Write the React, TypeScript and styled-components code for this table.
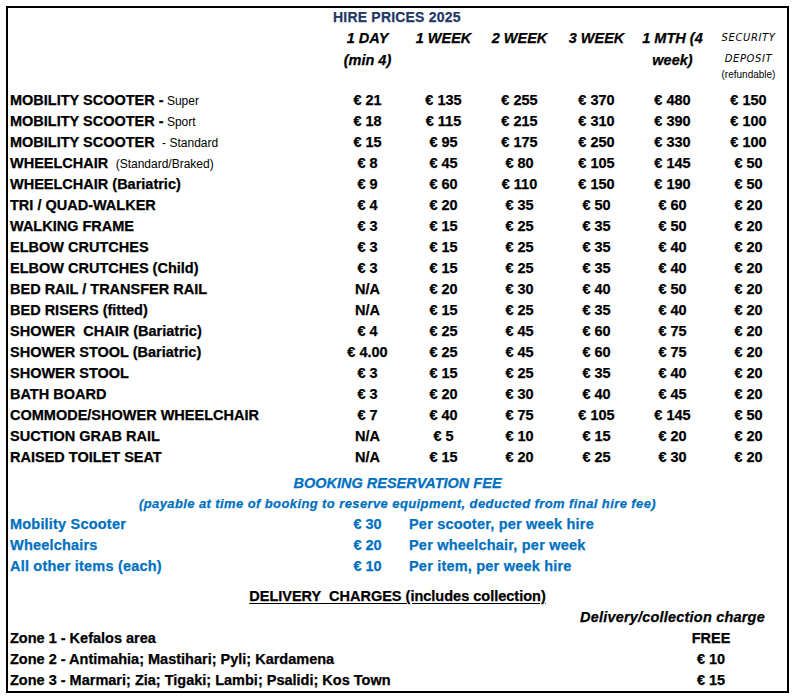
import React from 'react';
import styled, { createGlobalStyle } from 'styled-components';

const GlobalStyle = createGlobalStyle`
  html, body { margin: 0; padding: 0; background: #fff; }
  body { font-family: 'Liberation Sans', Arial, sans-serif; }
`;

const COLS = '321px 77px 75px 77px 77px 75px 77px';

const Sheet = styled.div`
  margin: 6px 0 0 6px;
  width: 779px;
  border: 2px solid #000;
  font-family: 'Liberation Sans', Arial, sans-serif;
  color: #000;
  font-size: 14.5px;
  font-weight: 700;
  -webkit-text-stroke: 0.25px currentColor;
`;

const Row = styled.div<{ $h?: number; $pt?: number }>`
  display: grid;
  grid-template-columns: ${COLS};
  height: ${(p) => p.$h ?? 21}px;
  padding-top: ${(p) => p.$pt ?? 0}px;
  box-sizing: border-box;
  line-height: ${(p) => (p.$h ?? 21) - (p.$pt ?? 0)}px;
  white-space: pre;
`;

const Title = styled.div`
  grid-column: 2 / span 3;
  padding-left: 4px;
  color: #1f3864;
  font-size: 14px;
  letter-spacing: 0.2px;
`;

const HeadCell = styled.div<{ $col: number }>`
  grid-column: ${(p) => p.$col};
  display: flex;
  flex-direction: column;
  align-items: center;
  font-style: italic;
  line-height: 22px;
`;

const Thin = styled.span`
  font-family: 'DejaVu Sans', sans-serif;
  font-size: 10px;
  font-weight: 200;
  font-style: italic;
  letter-spacing: 0.6px;
  -webkit-text-stroke: 0;
  line-height: 21px;
  height: 21px;
`;

const Small = styled.span`
  font-size: 10px;
  font-weight: 400;
  font-style: normal;
  line-height: 12px;
  -webkit-text-stroke: 0;
`;

const Name = styled.div`
  grid-column: 1;
  padding-left: 2px;
  overflow: hidden;
`;

const Sub = styled.span`
  font-size: 12px;
  font-weight: 400;
  -webkit-text-stroke: 0;
`;

const Price = styled.div`
  text-align: center;
`;

const Blue = styled.div<{ $size?: number; $ls?: number }>`
  grid-column: 1 / -1;
  text-align: center;
  color: #0070c0;
  font-style: italic;
  font-size: ${(p) => p.$size ?? 14.5}px;
  letter-spacing: ${(p) => p.$ls ?? 0}px;
`;

const FeeLabel = styled.div`
  grid-column: 1;
  padding-left: 2px;
  color: #0070c0;
  letter-spacing: 0.2px;
`;

const FeeAmount = styled.div`
  grid-column: 2;
  text-align: center;
  color: #0070c0;
`;

const FeeNote = styled.div`
  grid-column: 3 / -1;
  padding-left: 3px;
  color: #0070c0;
  letter-spacing: 0.2px;
`;

const DeliveryTitle = styled.div`
  grid-column: 1 / -1;
  text-align: center;
  text-decoration: underline;
  text-underline-offset: 2px;
`;

const ChargeHead = styled.div`
  grid-column: 5 / -1;
  text-align: center;
  font-style: italic;
  letter-spacing: 0.2px;
`;

const ZoneName = styled.div`
  grid-column: 1 / 5;
  padding-left: 2px;
`;

const ZoneCharge = styled.div`
  grid-column: 6 / -1;
  text-align: center;
`;

type Item = { name: string; sub?: string; prices: string[] };

const items: Item[] = [
  { name: 'MOBILITY SCOOTER -', sub: ' Super', prices: ['21', '135', '255', '370', '480', '150'] },
  { name: 'MOBILITY SCOOTER -', sub: ' Sport', prices: ['18', '115', '215', '310', '390', '100'] },
  { name: 'MOBILITY SCOOTER ', sub: ' - Standard', prices: ['15', '95', '175', '250', '330', '100'] },
  { name: 'WHEELCHAIR ', sub: ' (Standard/Braked)', prices: ['8', '45', '80', '105', '145', '50'] },
  { name: 'WHEELCHAIR (Bariatric)', prices: ['9', '60', '110', '150', '190', '50'] },
  { name: 'TRI / QUAD-WALKER', prices: ['4', '20', '35', '50', '60', '20'] },
  { name: 'WALKING FRAME', prices: ['3', '15', '25', '35', '50', '20'] },
  { name: 'ELBOW CRUTCHES', prices: ['3', '15', '25', '35', '40', '20'] },
  { name: 'ELBOW CRUTCHES (Child)', prices: ['3', '15', '25', '35', '40', '20'] },
  { name: 'BED RAIL / TRANSFER RAIL', prices: ['N/A', '20', '30', '40', '50', '20'] },
  { name: 'BED RISERS (fitted)', prices: ['N/A', '15', '25', '35', '40', '20'] },
  { name: 'SHOWER  CHAIR (Bariatric)', prices: ['4', '25', '45', '60', '75', '20'] },
  { name: 'SHOWER STOOL (Bariatric)', prices: ['4.00', '25', '45', '60', '75', '20'] },
  { name: 'SHOWER STOOL', prices: ['3', '15', '25', '35', '40', '20'] },
  { name: 'BATH BOARD', prices: ['3', '20', '30', '40', '45', '20'] },
  { name: 'COMMODE/SHOWER WHEELCHAIR', prices: ['7', '40', '75', '105', '145', '50'] },
  { name: 'SUCTION GRAB RAIL', prices: ['N/A', '5', '10', '15', '20', '20'] },
  { name: 'RAISED TOILET SEAT', prices: ['N/A', '15', '20', '25', '30', '20'] },
];

const fees = [
  { label: 'Mobility Scooter', amount: '€ 30', note: 'Per scooter, per week hire' },
  { label: 'Wheelchairs', amount: '€ 20', note: 'Per wheelchair, per week' },
  { label: 'All other items (each)', amount: '€ 10', note: 'Per item, per week hire' },
];

const zones = [
  { name: 'Zone 1 - Kefalos area', charge: 'FREE' },
  { name: 'Zone 2 - Antimahia; Mastihari; Pyli; Kardamena', charge: '€ 10' },
  { name: 'Zone 3 - Marmari; Zia; Tigaki; Lambi; Psalidi; Kos Town', charge: '€ 15' },
];

const fmt = (p: string) => (p === 'N/A' ? p : `€ ${p}`);

export default function App() {
  return (
    <>
      <GlobalStyle />
      <Sheet>
        <Row $h={19}>
          <Title>HIRE PRICES 2025</Title>
        </Row>
        <Row $h={63}>
          <HeadCell $col={2}>
            <span>1 DAY</span>
            <span>(min 4)</span>
          </HeadCell>
          <HeadCell $col={3}>
            <span>1 WEEK</span>
          </HeadCell>
          <HeadCell $col={4}>
            <span>2 WEEK</span>
          </HeadCell>
          <HeadCell $col={5}>
            <span>3 WEEK</span>
          </HeadCell>
          <HeadCell $col={6}>
            <span>1 MTH (4</span>
            <span>week)</span>
          </HeadCell>
          <HeadCell $col={7}>
            <Thin>SECURITY</Thin>
            <Thin>DEPOSIT</Thin>
            <Small>(refundable)</Small>
          </HeadCell>
        </Row>
        {items.map((it, i) => (
          <Row key={i}>
            <Name>
              {it.name}
              {it.sub && <Sub>{it.sub}</Sub>}
            </Name>
            {it.prices.map((p, j) => (
              <Price key={j}>{fmt(p)}</Price>
            ))}
          </Row>
        ))}
        <Row $h={26} $pt={5}>
          <Blue>BOOKING RESERVATION FEE</Blue>
        </Row>
        <Row $h={20}>
          <Blue $size={13} $ls={0.4}>
            (payable at time of booking to reserve equipment, deducted from final hire fee)
          </Blue>
        </Row>
        {fees.map((f) => (
          <Row key={f.label}>
            <FeeLabel>{f.label}</FeeLabel>
            <FeeAmount>{f.amount}</FeeAmount>
            <FeeNote>{f.note}</FeeNote>
          </Row>
        ))}
        <Row $h={30} $pt={9}>
          <DeliveryTitle>DELIVERY  CHARGES (includes collection)</DeliveryTitle>
        </Row>
        <Row>
          <ChargeHead>Delivery/collection charge</ChargeHead>
        </Row>
        {zones.map((z) => (
          <Row key={z.name}>
            <ZoneName>{z.name}</ZoneName>
            <ZoneCharge>{z.charge}</ZoneCharge>
          </Row>
        ))}
      </Sheet>
    </>
  );
}
